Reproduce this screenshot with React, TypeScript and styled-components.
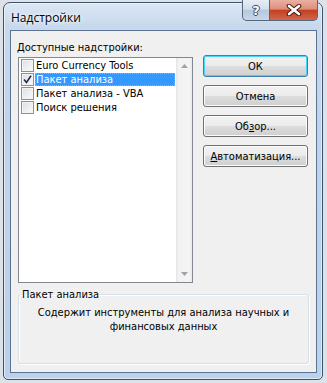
import React from 'react';
import styled, {createGlobalStyle} from 'styled-components';

const GlobalStyle = createGlobalStyle`
    html, body {
        margin: 0;
        padding: 0;
        background: #dde2e8;
    }

    body {
        width: 327px;
        height: 383px;
        overflow: hidden;
    }
`

const addIns = [
    {id: 1, name: 'Euro Currency Tools', checked: false, selected: false},
    {id: 2, name: 'Пакет анализа', checked: true, selected: true},
    {id: 3, name: 'Пакет анализа - VBA', checked: false, selected: false},
    {id: 4, name: 'Поиск решения', checked: false, selected: false},
]

const CheckMark = () => (
    <svg width="9" height="9" viewBox="0 0 9 9">
        <path d="M1 4.5 L3.5 7.5 L8 0.8" fill="none" stroke="#1c2f4a" strokeWidth="1.6"/>
    </svg>
)

const Arrow = ({up}: { up?: boolean }) => (
    <svg width="7" height="4" viewBox="0 0 7 4">
        <path d={up ? 'M0 4 L3.5 0 L7 4 Z' : 'M0 0 L7 0 L3.5 4 Z'} fill="#a2a2a2"/>
    </svg>
)

export default function App() {
    return (
        <>
            <GlobalStyle/>
            <Window>
                <TitleBar>
                    <Title>Надстройки</Title>
                    <CaptionButtons>
                        <HelpButton>?</HelpButton>
                        <CloseButton>
                            <svg width="16" height="12" viewBox="0 0 16 12">
                                <path d="M3 2 L13 10 M13 2 L3 10" stroke="#4a1b12" strokeWidth="4.6"
                                      strokeLinecap="round"/>
                                <path d="M3 2 L13 10 M13 2 L3 10" stroke="#ffffff" strokeWidth="2.6"
                                      strokeLinecap="round"/>
                            </svg>
                        </CloseButton>
                    </CaptionButtons>
                </TitleBar>

                <Client>
                    <TopRow>
                        <LeftColumn>
                            <FieldLabel><Mnemonic>Д</Mnemonic>оступные надстройки:</FieldLabel>
                            <ListBox>
                                <Items>
                                    {addIns.map(el => (
                                        <Row key={el.id}>
                                            <CheckBox>{el.checked && <CheckMark/>}</CheckBox>
                                            <ItemText $selected={el.selected}>{el.name}</ItemText>
                                        </Row>
                                    ))}
                                </Items>
                                <ScrollBar>
                                    <ScrollArrow><Arrow up/></ScrollArrow>
                                    <ScrollArrow><Arrow/></ScrollArrow>
                                </ScrollBar>
                            </ListBox>
                        </LeftColumn>

                        <ButtonColumn>
                            <Button $default>ОК</Button>
                            <Button>Отмена</Button>
                            <Button>Об<Mnemonic>з</Mnemonic>ор...</Button>
                            <Button><Mnemonic>А</Mnemonic>втоматизация...</Button>
                        </ButtonColumn>
                    </TopRow>

                    <GroupBox>
                        <Legend>Пакет анализа</Legend>
                        <Description>
                            Содержит инструменты для анализа научных и<br/>
                            финансовых данных
                        </Description>
                    </GroupBox>
                </Client>
            </Window>
        </>
    );
}

const uiFont = `"DejaVu Sans Condensed", "DejaVu Sans", sans-serif`

const Window = styled.div`
    box-sizing: border-box;
    width: 320px;
    height: 378px;
    margin: 2px 0 0 3px;
    display: flex;
    flex-direction: column;
    border: 1px solid #3d5269;
    border-radius: 7px 7px 5px 5px;
    background: linear-gradient(180deg, #dce7f3 0%, #c8d9ed 6%, #bfd4eb 30%, #b9d1ea 100%);
    box-shadow: inset 0 0 0 1px rgba(255, 255, 255, 0.55);
    padding: 0 5px 6px 6px;
`

const TitleBar = styled.div`
    height: 27px;
    display: flex;
    justify-content: space-between;
    align-items: flex-start;
    flex-shrink: 0;
`

const Title = styled.span`
    margin: 7px 0 0 1px;
    font-family: "Open Sans", "Noto Sans", sans-serif;
    font-size: 12px;
    line-height: 15px;
    color: #000;
    text-shadow: 0 0 6px rgba(255, 255, 255, 0.9), 0 0 3px #fff;
`

const CaptionButtons = styled.div`
    display: flex;
    margin: -3px -1px 0 0;
    height: 20px;
    border: 1px solid #56677c;
    border-top: none;
    border-radius: 0 0 5px 5px;
    overflow: hidden;
    background: #56677c;
    gap: 1px;
`

const HelpButton = styled.div`
    width: 26px;
    display: flex;
    align-items: center;
    justify-content: center;
    background: linear-gradient(180deg, #e6edf5 0%, #d3dfec 45%, #b6c8dc 52%, #c9d8e9 100%);
    font-family: "DejaVu Sans", sans-serif;
    font-weight: bold;
    font-size: 13px;
    color: #fff;
    text-shadow: 1px 0 0 #3b4a5c, -1px 0 0 #3b4a5c, 0 1px 0 #3b4a5c, 0 -1px 0 #3b4a5c;
`

const CloseButton = styled.div`
    width: 47px;
    display: flex;
    align-items: center;
    justify-content: center;
    background: linear-gradient(180deg, #ebb0a2 0%, #dd8f7c 45%, #c5401f 52%, #d2664c 100%);
`

const Client = styled.div`
    flex: 1;
    display: flex;
    flex-direction: column;
    background: #f0f0f0;
    border: 1px solid #5c7290;
    padding: 10px 7px 0 7px;
    font-family: ${uiFont};
    font-size: 11px;
    color: #000;
`

const TopRow = styled.div`
    display: flex;
    gap: 10px;
`

const LeftColumn = styled.div`
    width: 175px;
    display: flex;
    flex-direction: column;
`

const FieldLabel = styled.div`
    line-height: 13px;
    margin: 0 0 3px -1px;
`

const Mnemonic = styled.span`
    text-decoration: underline;
    text-underline-offset: 1px;
`

const ListBox = styled.div`
    box-sizing: border-box;
    height: 226px;
    display: flex;
    border: 1px solid #828790;
    background: #fff;
`

const Items = styled.div`
    flex: 1;
    padding: 0 1px 0 2px;
`

const Row = styled.div`
    height: 14px;
    display: flex;
    align-items: center;
    gap: 1px;
`

const CheckBox = styled.span`
    box-sizing: border-box;
    width: 13px;
    height: 13px;
    flex-shrink: 0;
    display: flex;
    align-items: center;
    justify-content: center;
    border: 1px solid #8f8f8f;
    background: linear-gradient(135deg, #d9dde3 0%, #eef0f3 60%, #f8f8f8 100%);
    box-shadow: inset 0 0 0 1px #f4f4f4;
`

const ItemText = styled.span<{ $selected?: boolean }>`
    flex: 1;
    height: 13px;
    line-height: 13px;
    padding-left: 1px;
    box-sizing: border-box;
    white-space: nowrap;
    background: ${p => p.$selected ? '#3399ff' : 'transparent'};
    color: ${p => p.$selected ? '#fff' : '#000'};
    outline: ${p => p.$selected ? '1px dotted #e9a04f' : 'none'};
    outline-offset: -1px;
`

const ScrollBar = styled.div`
    width: 16px;
    display: flex;
    flex-direction: column;
    justify-content: space-between;
    background: linear-gradient(90deg, #e4e4e4 0%, #f2f2f2 15%, #f4f4f4 85%, #e8e8e8 100%);
`

const ScrollArrow = styled.div`
    height: 16px;
    display: flex;
    align-items: center;
    justify-content: center;
`

const ButtonColumn = styled.div`
    width: 105px;
    display: flex;
    flex-direction: column;
    gap: 8px;
    padding-top: 14px;
`

const Button = styled.div<{ $default?: boolean }>`
    box-sizing: border-box;
    height: 22px;
    display: flex;
    align-items: center;
    justify-content: center;
    border: 1px solid ${p => p.$default ? '#3c7fb1' : '#707070'};
    border-radius: 3px;
    background: ${p => p.$default
            ? 'linear-gradient(180deg, #eaf6fd 0%, #d9f0fc 48%, #bee6fd 52%, #a7d9f5 100%)'
            : 'linear-gradient(180deg, #f2f2f2 0%, #ebebeb 48%, #dddddd 52%, #cfcfcf 100%)'};
    box-shadow: inset 0 0 0 1px ${p => p.$default ? '#48d4fb' : '#fcfcfc'};
    ${p => p.$default && 'background: linear-gradient(180deg, #f2f2f2 0%, #ebebeb 48%, #dddddd 52%, #cfcfcf 100%);'}
`

const GroupBox = styled.fieldset`
    box-sizing: border-box;
    width: 291px;
    height: 76px;
    margin: 5px 0 0 0;
    padding: 5px 0 0 0;
    border: 1px solid #d5dfe5;
    border-radius: 3px;
    box-shadow: inset 1px 1px 0 #fff, 1px 1px 0 #fff;
`

const Legend = styled.legend`
    padding: 0 1px;
    margin-left: 2px;
    line-height: 13px;
`

const Description = styled.div`
    text-align: center;
    line-height: 14px;
`
